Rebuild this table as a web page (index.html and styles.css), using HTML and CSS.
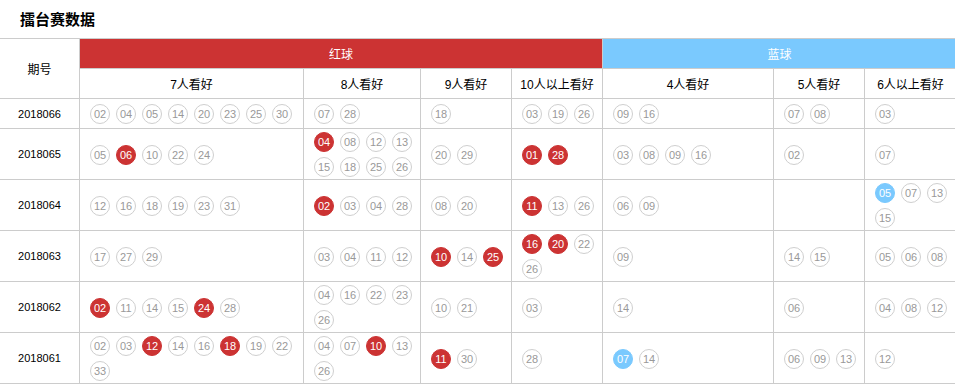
FILE: index.html
```html
<!DOCTYPE html>
<html lang="zh-CN">
<head>
<meta charset="utf-8">
<title>擂台赛数据</title>
<link rel="stylesheet" href="styles.css">
</head>
<body>
<div class="page">
  <h2 class="title">擂台赛数据</h2>
  <div class="grid">
    <div class="cell period">期号</div>
    <div class="cell group red">红球</div>
    <div class="cell group blue">蓝球</div>
    <div class="cell sub">7人看好</div>
    <div class="cell sub">8人看好</div>
    <div class="cell sub">9人看好</div>
    <div class="cell sub">10人以上看好</div>
    <div class="cell sub">4人看好</div>
    <div class="cell sub">5人看好</div>
    <div class="cell sub">6人以上看好</div>

    <div class="cell issue">2018066</div>
    <div class="cell balls"><span class="ball">02</span><span class="ball">04</span><span class="ball">05</span><span class="ball">14</span><span class="ball">20</span><span class="ball">23</span><span class="ball">25</span><span class="ball">30</span></div>
    <div class="cell balls"><span class="ball">07</span><span class="ball">28</span></div>
    <div class="cell balls"><span class="ball">18</span></div>
    <div class="cell balls"><span class="ball">03</span><span class="ball">19</span><span class="ball">26</span></div>
    <div class="cell balls"><span class="ball">09</span><span class="ball">16</span></div>
    <div class="cell balls"><span class="ball">07</span><span class="ball">08</span></div>
    <div class="cell balls"><span class="ball">03</span></div>

    <div class="cell issue">2018065</div>
    <div class="cell balls"><span class="ball">05</span><span class="ball hit-red">06</span><span class="ball">10</span><span class="ball">22</span><span class="ball">24</span></div>
    <div class="cell balls"><span class="ball hit-red">04</span><span class="ball">08</span><span class="ball">12</span><span class="ball">13</span><span class="ball">15</span><span class="ball">18</span><span class="ball">25</span><span class="ball">26</span></div>
    <div class="cell balls"><span class="ball">20</span><span class="ball">29</span></div>
    <div class="cell balls"><span class="ball hit-red">01</span><span class="ball hit-red">28</span></div>
    <div class="cell balls"><span class="ball">03</span><span class="ball">08</span><span class="ball">09</span><span class="ball">16</span></div>
    <div class="cell balls"><span class="ball">02</span></div>
    <div class="cell balls"><span class="ball">07</span></div>

    <div class="cell issue">2018064</div>
    <div class="cell balls"><span class="ball">12</span><span class="ball">16</span><span class="ball">18</span><span class="ball">19</span><span class="ball">23</span><span class="ball">31</span></div>
    <div class="cell balls"><span class="ball hit-red">02</span><span class="ball">03</span><span class="ball">04</span><span class="ball">28</span></div>
    <div class="cell balls"><span class="ball">08</span><span class="ball">20</span></div>
    <div class="cell balls"><span class="ball hit-red">11</span><span class="ball">13</span><span class="ball">26</span></div>
    <div class="cell balls"><span class="ball">06</span><span class="ball">09</span></div>
    <div class="cell balls"></div>
    <div class="cell balls"><span class="ball hit-blue">05</span><span class="ball">07</span><span class="ball">13</span><span class="ball">15</span></div>

    <div class="cell issue">2018063</div>
    <div class="cell balls"><span class="ball">17</span><span class="ball">27</span><span class="ball">29</span></div>
    <div class="cell balls"><span class="ball">03</span><span class="ball">04</span><span class="ball">11</span><span class="ball">12</span></div>
    <div class="cell balls"><span class="ball hit-red">10</span><span class="ball">14</span><span class="ball hit-red">25</span></div>
    <div class="cell balls"><span class="ball hit-red">16</span><span class="ball hit-red">20</span><span class="ball">22</span><span class="ball">26</span></div>
    <div class="cell balls"><span class="ball">09</span></div>
    <div class="cell balls"><span class="ball">14</span><span class="ball">15</span></div>
    <div class="cell balls"><span class="ball">05</span><span class="ball">06</span><span class="ball">08</span></div>

    <div class="cell issue">2018062</div>
    <div class="cell balls"><span class="ball hit-red">02</span><span class="ball">11</span><span class="ball">14</span><span class="ball">15</span><span class="ball hit-red">24</span><span class="ball">28</span></div>
    <div class="cell balls"><span class="ball">04</span><span class="ball">16</span><span class="ball">22</span><span class="ball">23</span><span class="ball">26</span></div>
    <div class="cell balls"><span class="ball">10</span><span class="ball">21</span></div>
    <div class="cell balls"><span class="ball">03</span></div>
    <div class="cell balls"><span class="ball">14</span></div>
    <div class="cell balls"><span class="ball">06</span></div>
    <div class="cell balls"><span class="ball">04</span><span class="ball">08</span><span class="ball">12</span></div>

    <div class="cell issue">2018061</div>
    <div class="cell balls"><span class="ball">02</span><span class="ball">03</span><span class="ball hit-red">12</span><span class="ball">14</span><span class="ball">16</span><span class="ball hit-red">18</span><span class="ball">19</span><span class="ball">22</span><span class="ball">33</span></div>
    <div class="cell balls"><span class="ball">04</span><span class="ball">07</span><span class="ball hit-red">10</span><span class="ball">13</span><span class="ball">26</span></div>
    <div class="cell balls"><span class="ball hit-red">11</span><span class="ball">30</span></div>
    <div class="cell balls"><span class="ball">28</span></div>
    <div class="cell balls"><span class="ball hit-blue">07</span><span class="ball">14</span></div>
    <div class="cell balls"><span class="ball">06</span><span class="ball">09</span><span class="ball">13</span></div>
    <div class="cell balls"><span class="ball">12</span></div>
  </div>
</div>
</body>
</html>
```

FILE: styles.css
```css
html, body {
  margin: 0;
  padding: 0;
  background: #fff;
  overflow: hidden;
}

body {
  font-family: "Liberation Sans", "Noto Sans CJK SC", sans-serif;
  font-size: 12px;
  color: #000;
}

.page {
  width: 956px;
}

.title {
  margin: 0;
  height: 38px;
  line-height: 38px;
  padding-left: 20px;
  font-size: 15px;
  font-weight: bold;
  font-family: "Noto Sans CJK SC", sans-serif;
  color: #000;
}

.grid {
  display: grid;
  grid-template-columns: 79px 223px 116px 90px 90px 170px 90px 91px;
  grid-template-rows: 29px 29px;
  grid-auto-rows: minmax(29px, auto);
  gap: 1px;
  background: #cccccc;
  padding: 1px 0;
  width: 956px;
}

.cell {
  background: #fff;
  display: flex;
  align-items: center;
  justify-content: center;
  font-family: "Liberation Sans", "Noto Sans CJK SC", sans-serif;
  font-size: 12px;
}

.period {
  grid-row: 1 / span 2;
  grid-column: 1;
  font-family: "Noto Sans CJK SC", sans-serif;
}

.group {
  color: #fff;
  font-family: "Noto Sans CJK SC", sans-serif;
}

.group.red {
  grid-column: 2 / span 4;
  background: #cc3333;
}

.group.blue {
  grid-column: 6 / span 3;
  background: #7ac9fe;
}

.sub {
  color: #000;
}

.issue {
  font-size: 11px;
  color: #000;
}

.balls {
  justify-content: flex-start;
  align-content: center;
  flex-wrap: wrap;
  column-gap: 6px;
  padding-left: 10px;
}

.ball {
  box-sizing: border-box;
  width: 20px;
  height: 20px;
  margin: 3px 0 2px;
  border: 1px solid #cfcfcf;
  border-radius: 50%;
  text-align: center;
  line-height: 18px;
  font-size: 11px;
  color: #999;
  font-family: "Liberation Sans", sans-serif;
}

.ball.hit-red {
  background: #cc3333;
  border-color: #cc3333;
  color: #fff;
}

.ball.hit-blue {
  background: #7ac9fe;
  border-color: #7ac9fe;
  color: #fff;
}
```
